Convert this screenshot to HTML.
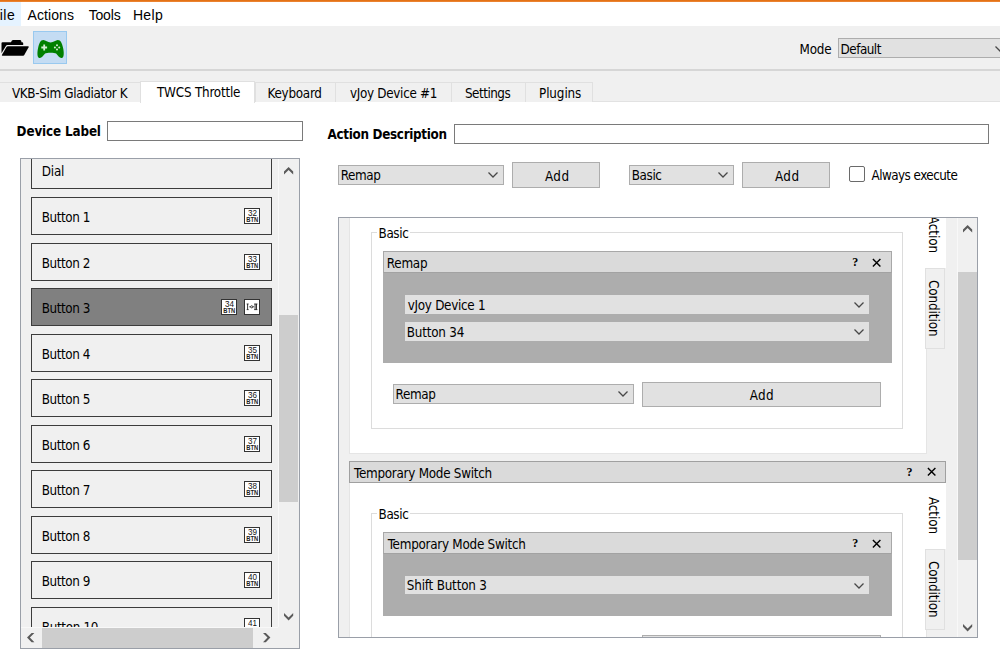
<!DOCTYPE html>
<html lang="en"><head><meta charset="utf-8"><title>Joystick Gremlin</title>
<style>
html,body{margin:0;padding:0}
body{width:1000px;height:671px;overflow:hidden;position:relative;background:#f0f0f0;color:#000;font-family:"DejaVu Sans Condensed", "Liberation Sans", sans-serif;font-size:13.33px}
.a{position:absolute;box-sizing:content-box}
.t{position:absolute;white-space:pre;line-height:normal}
svg{display:block;overflow:visible}
</style></head><body>
<div class="a" style="left:0px;top:0px;width:1000px;height:2px;background:linear-gradient(#e06a0a,#ee8a3c);"></div><div class="a" style="left:0px;top:2px;width:1000px;height:24px;background:#fff;"></div><div class="a" style="left:-2px;top:2px;width:23px;height:24px;background:#e5f3ff;"></div><span class="t" style="left:-9.40px;top:6.50px;font-family:'Liberation Sans', sans-serif;font-size:14px;letter-spacing:0.533px;">File</span><span class="t" style="left:27.50px;top:6.50px;font-family:'Liberation Sans', sans-serif;font-size:14px;letter-spacing:0.083px;">Actions</span><span class="t" style="left:88.70px;top:6.50px;font-family:'Liberation Sans', sans-serif;font-size:14px;letter-spacing:-0.175px;">Tools</span><span class="t" style="left:132.90px;top:6.50px;font-family:'Liberation Sans', sans-serif;font-size:14px;letter-spacing:0.367px;">Help</span><div class="a" style="left:0px;top:26px;width:1000px;height:44px;background:#f0f0f0;"></div><div class="a" style="left:0px;top:69px;width:1000px;height:2px;background:#d6d6d6;"></div><svg class="a" style="left:0;top:36px" width="32" height="24" viewBox="0 0 32 24"><path d="M1.5 7.2 Q1.5 6.2 2.5 6.2 L11 6.2 L11.9 4.6 Q12.3 3.9 13.2 3.9 L20 3.9 Q21 3.9 21.2 4.8 L21.5 6.2 L22.2 6.2 Q23.2 6.2 23.2 7.2 L23.2 8.9 L7.4 8.9 Q6.4 8.9 5.9 9.9 L1.5 17.3 Z" fill="#000"/><path d="M7.9 10.2 L28 10.2 Q29.2 10.2 28.6 11.3 L24.3 19.1 Q23.9 19.8 23.1 19.8 L2.6 19.8 Q1.4 19.8 2 18.7 L6.5 11 Q7 10.2 7.9 10.2 Z" fill="#000"/></svg><div class="a" style="left:33px;top:31px;width:32px;height:31px;background:#c4dcf3;border:1px solid #99c9ef;"></div><svg class="a" style="left:36px;top:38px" width="30" height="22" viewBox="0 0 30 22"><path d="M7.4 2.1 C9.6 2.1 11.6 4.5 14.6 4.5 C17.6 4.5 19.6 2.1 21.8 2.1 C24.8 2.1 26.1 5.5 27.1 10 C28 14 28.3 19.2 26 20 C23.7 20.7 22.1 17.5 20.1 15.6 C18.6 14.5 10.6 14.5 9.1 15.6 C7.1 17.5 5.5 20.7 3.2 20 C0.9 19.2 1.2 14 2.1 10 C3.1 5.5 4.4 2.1 7.4 2.1 Z" fill="#008000"/><path d="M7.3 6.6 h1.8 v2 h2 v1.8 h-2 v2 h-1.8 v-2 h-2 v-1.8 h2 z" fill="#d4ecd4"/><g fill="#d4ecd4"><circle cx="21" cy="7.2" r="1"/><circle cx="21" cy="11.5" r="1"/><circle cx="18.9" cy="9.4" r="1"/><circle cx="23.2" cy="9.4" r="1"/></g></svg><span class="t" style="left:799.50px;top:42.00px;font-family:'DejaVu Sans Condensed', 'Liberation Sans', sans-serif;font-size:13.33px;letter-spacing:-0.167px;">Mode</span><div class="a" style="left:838px;top:38px;width:170px;height:18px;background:#e1e1e1;border:1px solid #adadad;"></div><span class="t" style="left:840.60px;top:42.00px;font-family:'DejaVu Sans Condensed', 'Liberation Sans', sans-serif;font-size:13.33px;letter-spacing:-0.500px;">Default</span><svg class="a" style="left:994.3px;top:43.7px" width="12" height="10" viewBox="0 0 12 10"><path d="M1.5 2.5 L6 7 L10.5 2.5" fill="none" stroke="#484848" stroke-width="1.25"/></svg><div class="a" style="left:0px;top:102px;width:1000px;height:569px;background:#fff;"></div><div class="a" style="left:0px;top:101px;width:1000px;height:1px;background:#e2e2e2;"></div><div class="a" style="left:-2px;top:82px;width:143px;height:19px;background:#f0f0f0;border:1px solid #e0e0e0;border-bottom:none;"></div><span class="t" style="left:12.00px;top:86.00px;font-family:'DejaVu Sans Condensed', 'Liberation Sans', sans-serif;font-size:13.33px;letter-spacing:-0.350px;">VKB-Sim Gladiator K</span><div class="a" style="left:255px;top:82px;width:80px;height:19px;background:#f0f0f0;border:1px solid #e0e0e0;border-bottom:none;"></div><span class="t" style="left:267.50px;top:86.00px;font-family:'DejaVu Sans Condensed', 'Liberation Sans', sans-serif;font-size:13.33px;letter-spacing:-0.257px;">Keyboard</span><div class="a" style="left:335px;top:82px;width:116px;height:19px;background:#f0f0f0;border:1px solid #e0e0e0;border-bottom:none;"></div><span class="t" style="left:350.00px;top:86.00px;font-family:'DejaVu Sans Condensed', 'Liberation Sans', sans-serif;font-size:13.33px;letter-spacing:-0.308px;">vJoy Device #1</span><div class="a" style="left:451px;top:82px;width:74px;height:19px;background:#f0f0f0;border:1px solid #e0e0e0;border-bottom:none;"></div><span class="t" style="left:465.00px;top:86.00px;font-family:'DejaVu Sans Condensed', 'Liberation Sans', sans-serif;font-size:13.33px;letter-spacing:-0.500px;">Settings</span><div class="a" style="left:525px;top:82px;width:66px;height:19px;background:#f0f0f0;border:1px solid #e0e0e0;border-bottom:none;"></div><span class="t" style="left:539.00px;top:86.00px;font-family:'DejaVu Sans Condensed', 'Liberation Sans', sans-serif;font-size:13.33px;letter-spacing:-0.100px;">Plugins</span><div class="a" style="left:140px;top:81px;width:113px;height:21px;background:#fff;border:1px solid #e0e0e0;border-bottom:none;"></div><span class="t" style="left:157.00px;top:85.00px;font-family:'DejaVu Sans Condensed', 'Liberation Sans', sans-serif;font-size:13.33px;letter-spacing:-0.208px;">TWCS Throttle</span><span class="t" style="left:16.60px;top:123.50px;font-family:'DejaVu Sans Condensed', 'Liberation Sans', sans-serif;font-size:13.33px;font-weight:700;letter-spacing:-0.145px;">Device Label</span><div class="a" style="left:107px;top:121px;width:194px;height:18px;background:#fff;border:1px solid #7a7a7a;"></div><div class="a" style="left:20px;top:158px;width:278px;height:489px;background:#f0f0f0;border:1px solid #9a9fa8;overflow:hidden;"><div class="a" style="left:10px;top:-8px;width:239px;height:36px;background:#f0f0f0;border:1px solid #3c3c3c;"></div><span class="t" style="left:20.80px;top:5.00px;font-family:'DejaVu Sans Condensed', 'Liberation Sans', sans-serif;font-size:13.33px;letter-spacing:-0.200px;">Dial</span><div class="a" style="left:10px;top:38px;width:239px;height:36px;background:#f0f0f0;border:1px solid #3c3c3c;"></div><span class="t" style="left:20.80px;top:51.00px;font-family:'DejaVu Sans Condensed', 'Liberation Sans', sans-serif;font-size:13.33px;letter-spacing:-0.429px;">Button 1</span><svg class="a" style="left:223px;top:49px" width="16" height="16" viewBox="0 0 16 16"><rect x="0.5" y="0.5" width="15" height="15" fill="#fff" stroke="#333" stroke-width="1"/><text x="8.5" y="7.5" font-family="Liberation Sans, sans-serif" font-size="8.2" text-anchor="middle" fill="#111" textLength="9" lengthAdjust="spacingAndGlyphs">32</text><text x="8.2" y="14.2" font-family="Liberation Sans, sans-serif" font-size="6.5" font-weight="700" text-anchor="middle" fill="#222" textLength="12" lengthAdjust="spacingAndGlyphs">BTN</text></svg><div class="a" style="left:10px;top:84px;width:239px;height:36px;background:#f0f0f0;border:1px solid #3c3c3c;"></div><span class="t" style="left:20.80px;top:97.00px;font-family:'DejaVu Sans Condensed', 'Liberation Sans', sans-serif;font-size:13.33px;letter-spacing:-0.429px;">Button 2</span><svg class="a" style="left:223px;top:95px" width="16" height="16" viewBox="0 0 16 16"><rect x="0.5" y="0.5" width="15" height="15" fill="#fff" stroke="#333" stroke-width="1"/><text x="8.5" y="7.5" font-family="Liberation Sans, sans-serif" font-size="8.2" text-anchor="middle" fill="#111" textLength="9" lengthAdjust="spacingAndGlyphs">33</text><text x="8.2" y="14.2" font-family="Liberation Sans, sans-serif" font-size="6.5" font-weight="700" text-anchor="middle" fill="#222" textLength="12" lengthAdjust="spacingAndGlyphs">BTN</text></svg><div class="a" style="left:10px;top:129px;width:239px;height:36px;background:#808080;border:1px solid #3c3c3c;"></div><span class="t" style="left:20.80px;top:142.00px;font-family:'DejaVu Sans Condensed', 'Liberation Sans', sans-serif;font-size:13.33px;letter-spacing:-0.429px;">Button 3</span><svg class="a" style="left:200px;top:140px" width="16" height="16" viewBox="0 0 16 16"><rect x="0.5" y="0.5" width="15" height="15" fill="#fff" stroke="#333" stroke-width="1"/><text x="8.5" y="7.5" font-family="Liberation Sans, sans-serif" font-size="8.2" text-anchor="middle" fill="#111" textLength="9" lengthAdjust="spacingAndGlyphs">34</text><text x="8.2" y="14.2" font-family="Liberation Sans, sans-serif" font-size="6.5" font-weight="700" text-anchor="middle" fill="#222" textLength="12" lengthAdjust="spacingAndGlyphs">BTN</text></svg><svg class="a" style="left:223px;top:140px" width="16" height="16" viewBox="0 0 16 16"><rect x="0.5" y="0.5" width="15" height="15" fill="#fff" stroke="#333" stroke-width="1"/><path d="M3.6 5 V10.6 M2.7 5 H4.6 M2.7 10.6 H4.6 M11.1 5 V10.6 M12.5 5 V10.6 M10.2 5 H13.4 M10.2 10.6 H13.4" stroke="#222" stroke-width="0.9" fill="none"/><path d="M5.2 7.8 H10.2" stroke="#222" stroke-width="0.8"/><circle cx="7.7" cy="7.8" r="1.1" fill="#fff" stroke="#222" stroke-width="0.8"/></svg><div class="a" style="left:10px;top:175px;width:239px;height:36px;background:#f0f0f0;border:1px solid #3c3c3c;"></div><span class="t" style="left:20.80px;top:188.00px;font-family:'DejaVu Sans Condensed', 'Liberation Sans', sans-serif;font-size:13.33px;letter-spacing:-0.429px;">Button 4</span><svg class="a" style="left:223px;top:186px" width="16" height="16" viewBox="0 0 16 16"><rect x="0.5" y="0.5" width="15" height="15" fill="#fff" stroke="#333" stroke-width="1"/><text x="8.5" y="7.5" font-family="Liberation Sans, sans-serif" font-size="8.2" text-anchor="middle" fill="#111" textLength="9" lengthAdjust="spacingAndGlyphs">35</text><text x="8.2" y="14.2" font-family="Liberation Sans, sans-serif" font-size="6.5" font-weight="700" text-anchor="middle" fill="#222" textLength="12" lengthAdjust="spacingAndGlyphs">BTN</text></svg><div class="a" style="left:10px;top:220px;width:239px;height:36px;background:#f0f0f0;border:1px solid #3c3c3c;"></div><span class="t" style="left:20.80px;top:233.00px;font-family:'DejaVu Sans Condensed', 'Liberation Sans', sans-serif;font-size:13.33px;letter-spacing:-0.429px;">Button 5</span><svg class="a" style="left:223px;top:231px" width="16" height="16" viewBox="0 0 16 16"><rect x="0.5" y="0.5" width="15" height="15" fill="#fff" stroke="#333" stroke-width="1"/><text x="8.5" y="7.5" font-family="Liberation Sans, sans-serif" font-size="8.2" text-anchor="middle" fill="#111" textLength="9" lengthAdjust="spacingAndGlyphs">36</text><text x="8.2" y="14.2" font-family="Liberation Sans, sans-serif" font-size="6.5" font-weight="700" text-anchor="middle" fill="#222" textLength="12" lengthAdjust="spacingAndGlyphs">BTN</text></svg><div class="a" style="left:10px;top:266px;width:239px;height:36px;background:#f0f0f0;border:1px solid #3c3c3c;"></div><span class="t" style="left:20.80px;top:279.00px;font-family:'DejaVu Sans Condensed', 'Liberation Sans', sans-serif;font-size:13.33px;letter-spacing:-0.429px;">Button 6</span><svg class="a" style="left:223px;top:277px" width="16" height="16" viewBox="0 0 16 16"><rect x="0.5" y="0.5" width="15" height="15" fill="#fff" stroke="#333" stroke-width="1"/><text x="8.5" y="7.5" font-family="Liberation Sans, sans-serif" font-size="8.2" text-anchor="middle" fill="#111" textLength="9" lengthAdjust="spacingAndGlyphs">37</text><text x="8.2" y="14.2" font-family="Liberation Sans, sans-serif" font-size="6.5" font-weight="700" text-anchor="middle" fill="#222" textLength="12" lengthAdjust="spacingAndGlyphs">BTN</text></svg><div class="a" style="left:10px;top:311px;width:239px;height:36px;background:#f0f0f0;border:1px solid #3c3c3c;"></div><span class="t" style="left:20.80px;top:324.00px;font-family:'DejaVu Sans Condensed', 'Liberation Sans', sans-serif;font-size:13.33px;letter-spacing:-0.429px;">Button 7</span><svg class="a" style="left:223px;top:322px" width="16" height="16" viewBox="0 0 16 16"><rect x="0.5" y="0.5" width="15" height="15" fill="#fff" stroke="#333" stroke-width="1"/><text x="8.5" y="7.5" font-family="Liberation Sans, sans-serif" font-size="8.2" text-anchor="middle" fill="#111" textLength="9" lengthAdjust="spacingAndGlyphs">38</text><text x="8.2" y="14.2" font-family="Liberation Sans, sans-serif" font-size="6.5" font-weight="700" text-anchor="middle" fill="#222" textLength="12" lengthAdjust="spacingAndGlyphs">BTN</text></svg><div class="a" style="left:10px;top:357px;width:239px;height:36px;background:#f0f0f0;border:1px solid #3c3c3c;"></div><span class="t" style="left:20.80px;top:370.00px;font-family:'DejaVu Sans Condensed', 'Liberation Sans', sans-serif;font-size:13.33px;letter-spacing:-0.429px;">Button 8</span><svg class="a" style="left:223px;top:368px" width="16" height="16" viewBox="0 0 16 16"><rect x="0.5" y="0.5" width="15" height="15" fill="#fff" stroke="#333" stroke-width="1"/><text x="8.5" y="7.5" font-family="Liberation Sans, sans-serif" font-size="8.2" text-anchor="middle" fill="#111" textLength="9" lengthAdjust="spacingAndGlyphs">39</text><text x="8.2" y="14.2" font-family="Liberation Sans, sans-serif" font-size="6.5" font-weight="700" text-anchor="middle" fill="#222" textLength="12" lengthAdjust="spacingAndGlyphs">BTN</text></svg><div class="a" style="left:10px;top:402px;width:239px;height:36px;background:#f0f0f0;border:1px solid #3c3c3c;"></div><span class="t" style="left:20.80px;top:415.00px;font-family:'DejaVu Sans Condensed', 'Liberation Sans', sans-serif;font-size:13.33px;letter-spacing:-0.429px;">Button 9</span><svg class="a" style="left:223px;top:413px" width="16" height="16" viewBox="0 0 16 16"><rect x="0.5" y="0.5" width="15" height="15" fill="#fff" stroke="#333" stroke-width="1"/><text x="8.5" y="7.5" font-family="Liberation Sans, sans-serif" font-size="8.2" text-anchor="middle" fill="#111" textLength="9" lengthAdjust="spacingAndGlyphs">40</text><text x="8.2" y="14.2" font-family="Liberation Sans, sans-serif" font-size="6.5" font-weight="700" text-anchor="middle" fill="#222" textLength="12" lengthAdjust="spacingAndGlyphs">BTN</text></svg><div class="a" style="left:10px;top:448px;width:239px;height:36px;background:#f0f0f0;border:1px solid #3c3c3c;"></div><span class="t" style="left:20.80px;top:461.00px;font-family:'DejaVu Sans Condensed', 'Liberation Sans', sans-serif;font-size:13.33px;letter-spacing:-0.338px;">Button 10</span><svg class="a" style="left:223px;top:459px" width="16" height="16" viewBox="0 0 16 16"><rect x="0.5" y="0.5" width="15" height="15" fill="#fff" stroke="#333" stroke-width="1"/><text x="8.5" y="7.5" font-family="Liberation Sans, sans-serif" font-size="8.2" text-anchor="middle" fill="#111" textLength="9" lengthAdjust="spacingAndGlyphs">41</text><text x="8.2" y="14.2" font-family="Liberation Sans, sans-serif" font-size="6.5" font-weight="700" text-anchor="middle" fill="#222" textLength="12" lengthAdjust="spacingAndGlyphs">BTN</text></svg><div class="a" style="left:257px;top:0px;width:20px;height:468px;background:#f0f0f0;"></div><div class="a" style="left:257px;top:0px;width:1px;height:468px;background:#f8f8f8;"></div><div class="a" style="left:258px;top:156px;width:19px;height:187px;background:#cdcdcd;"></div><svg class="a" style="left:262.9px;top:8.1px" width="9.2" height="7.4" viewBox="0 0 9.2 7.4"><polygon points="4.6,0.0 9.2,4.6 9.2,7.4 4.6,2.9 0.0,7.4 0.0,4.6" fill="#5a5a5a"/></svg><svg class="a" style="left:262.9px;top:454.2px" width="9.2" height="7.4" viewBox="0 0 9.2 7.4"><polygon points="4.6,7.4 9.2,2.8 9.2,0.0 4.6,4.5 0.0,0.0 0.0,2.8" fill="#5a5a5a"/></svg><div class="a" style="left:0px;top:468px;width:278px;height:21px;background:#f0f0f0;"></div><div class="a" style="left:0px;top:468px;width:257px;height:1px;background:#f8f8f8;"></div><div class="a" style="left:21px;top:469px;width:211px;height:20px;background:#cdcdcd;"></div><svg class="a" style="left:6.3px;top:474.1px" width="7.4" height="9.2" viewBox="0 0 7.4 9.2"><polygon points="0.0,4.6 4.6,9.2 7.4,9.2 2.9,4.6 7.4,0.0 4.6,0.0" fill="#5a5a5a"/></svg><svg class="a" style="left:242.3px;top:474.1px" width="7.4" height="9.2" viewBox="0 0 7.4 9.2"><polygon points="7.4,4.6 2.8,9.2 0.0,9.2 4.5,4.6 0.0,0.0 2.8,0.0" fill="#5a5a5a"/></svg></div><span class="t" style="left:327.50px;top:127.00px;font-family:'DejaVu Sans Condensed', 'Liberation Sans', sans-serif;font-size:13.33px;font-weight:700;letter-spacing:-0.306px;">Action Description</span><div class="a" style="left:454px;top:124px;width:533px;height:18px;background:#fff;border:1px solid #7a7a7a;"></div><div class="a" style="left:338px;top:165px;width:164px;height:18px;background:#e1e1e1;border:1px solid #adadad;"></div><span class="t" style="left:340.70px;top:168.00px;font-family:'DejaVu Sans Condensed', 'Liberation Sans', sans-serif;font-size:13.33px;letter-spacing:-0.375px;">Remap</span><svg class="a" style="left:487.4px;top:170.2px" width="12" height="10" viewBox="0 0 12 10"><path d="M1.5 2.5 L6 7 L10.5 2.5" fill="none" stroke="#484848" stroke-width="1.25"/></svg><div class="a" style="left:512px;top:162px;width:86px;height:24px;background:#e1e1e1;border:1px solid #adadad;"></div><span class="t" style="left:545.00px;top:169.00px;font-family:'DejaVu Sans Condensed', 'Liberation Sans', sans-serif;font-size:13.33px;letter-spacing:0.400px;">Add</span><div class="a" style="left:629px;top:165px;width:103px;height:18px;background:#e1e1e1;border:1px solid #adadad;"></div><span class="t" style="left:631.70px;top:168.00px;font-family:'DejaVu Sans Condensed', 'Liberation Sans', sans-serif;font-size:13.33px;letter-spacing:-0.375px;">Basic</span><svg class="a" style="left:717.4px;top:170.2px" width="12" height="10" viewBox="0 0 12 10"><path d="M1.5 2.5 L6 7 L10.5 2.5" fill="none" stroke="#484848" stroke-width="1.25"/></svg><div class="a" style="left:742px;top:162px;width:86px;height:24px;background:#e1e1e1;border:1px solid #adadad;"></div><span class="t" style="left:775.00px;top:169.00px;font-family:'DejaVu Sans Condensed', 'Liberation Sans', sans-serif;font-size:13.33px;letter-spacing:0.400px;">Add</span><div class="a" style="left:849px;top:166px;width:14px;height:14px;background:#fff;border:1px solid #6a6a6a;border-radius:2px;"></div><span class="t" style="left:871.50px;top:168.00px;font-family:'DejaVu Sans Condensed', 'Liberation Sans', sans-serif;font-size:13.33px;letter-spacing:-0.538px;">Always execute</span><div class="a" style="left:338px;top:217px;width:638px;height:419px;background:#f0f0f0;border:1px solid #9a9fa8;overflow:hidden;"><div class="a" style="left:10px;top:-18px;width:576px;height:252px;background:#fff;border:1px solid #e5e5e5;"></div><div class="a" style="left:586px;top:-18px;width:21px;height:68px;background:#fff;"></div><div class="a" style="left:586px;top:50px;width:18px;height:79px;background:#f0f0f0;border:1px solid #e0e0e0;"></div><span class="t" style="left:601.50px;top:-2.50px;font-family:'DejaVu Sans Condensed', 'Liberation Sans', sans-serif;font-size:13.33px;letter-spacing:-0.100px;transform-origin:0 0;transform:rotate(90deg);">Action</span><span class="t" style="left:601.50px;top:62.00px;font-family:'DejaVu Sans Condensed', 'Liberation Sans', sans-serif;font-size:13.33px;letter-spacing:-0.088px;transform-origin:0 0;transform:rotate(90deg);">Condition</span><div class="a" style="left:32px;top:14px;width:530px;height:195px;border:1px solid #dcdcdc;"></div><div class="a" style="left:38px;top:8px;width:33px;height:14px;background:#fff;"></div><span class="t" style="left:39.60px;top:7.60px;font-family:'DejaVu Sans Condensed', 'Liberation Sans', sans-serif;font-size:13.33px;letter-spacing:-0.400px;">Basic</span><div class="a" style="left:44px;top:33px;width:507px;height:20px;background:#dadada;border:1px solid #a8a8a8;border-bottom:1px solid #a2a2a2;"></div><span class="t" style="left:47.80px;top:38.00px;font-family:'DejaVu Sans Condensed', 'Liberation Sans', sans-serif;font-size:13.33px;letter-spacing:-0.250px;">Remap</span><span class="t" style="left:513.20px;top:37.30px;font-family:'Liberation Serif', serif;font-size:12px;font-weight:700;letter-spacing:2.000px;">?</span><svg class="a" style="left:532.2px;top:38.80000000000001px" width="11" height="11" viewBox="0 0 11 11"><path d="M1.9 1.9 L9.4 9.4 M9.4 1.9 L1.9 9.4" stroke="#000" stroke-width="1.4"/></svg><div class="a" style="left:44px;top:55px;width:509px;height:90px;background:#adadad;"></div><div class="a" style="left:66px;top:77px;width:464px;height:19px;background:#e1e1e1;"></div><span class="t" style="left:68.80px;top:79.70px;font-family:'DejaVu Sans Condensed', 'Liberation Sans', sans-serif;font-size:13.33px;letter-spacing:-0.300px;">vJoy Device 1</span><svg class="a" style="left:514.3px;top:81.80000000000001px" width="12" height="10" viewBox="0 0 12 10"><path d="M1.5 2.5 L6 7 L10.5 2.5" fill="none" stroke="#484848" stroke-width="1.25"/></svg><div class="a" style="left:66px;top:104px;width:464px;height:19px;background:#e1e1e1;"></div><span class="t" style="left:67.80px;top:106.70px;font-family:'DejaVu Sans Condensed', 'Liberation Sans', sans-serif;font-size:13.33px;letter-spacing:-0.213px;">Button 34</span><svg class="a" style="left:514.3px;top:108.80000000000001px" width="12" height="10" viewBox="0 0 12 10"><path d="M1.5 2.5 L6 7 L10.5 2.5" fill="none" stroke="#484848" stroke-width="1.25"/></svg><div class="a" style="left:54px;top:166px;width:239px;height:18px;background:#e1e1e1;border:1px solid #adadad;"></div><span class="t" style="left:56.60px;top:169.00px;font-family:'DejaVu Sans Condensed', 'Liberation Sans', sans-serif;font-size:13.33px;letter-spacing:-0.375px;">Remap</span><svg class="a" style="left:278.20000000000005px;top:171.39999999999998px" width="12" height="10" viewBox="0 0 12 10"><path d="M1.5 2.5 L6 7 L10.5 2.5" fill="none" stroke="#484848" stroke-width="1.25"/></svg><div class="a" style="left:303px;top:164px;width:237px;height:23px;background:#e1e1e1;border:1px solid #adadad;"></div><span class="t" style="left:410.80px;top:170.00px;font-family:'DejaVu Sans Condensed', 'Liberation Sans', sans-serif;font-size:13.33px;letter-spacing:0.300px;">Add</span><div class="a" style="left:10px;top:243px;width:595px;height:20px;background:#dadada;border:1px solid #a0a0a0;"></div><span class="t" style="left:15.10px;top:247.50px;font-family:'DejaVu Sans Condensed', 'Liberation Sans', sans-serif;font-size:13.33px;letter-spacing:-0.260px;">Temporary Mode Switch</span><span class="t" style="left:567.60px;top:247.00px;font-family:'Liberation Serif', serif;font-size:12px;font-weight:700;letter-spacing:2.000px;">?</span><svg class="a" style="left:586.7px;top:248.39999999999998px" width="11" height="11" viewBox="0 0 11 11"><path d="M1.9 1.9 L9.4 9.4 M9.4 1.9 L1.9 9.4" stroke="#000" stroke-width="1.4"/></svg><div class="a" style="left:10px;top:265px;width:576px;height:217px;background:#fff;border:1px solid #e5e5e5;border-top:none;"></div><div class="a" style="left:586px;top:265px;width:21px;height:66px;background:#fff;"></div><div class="a" style="left:586px;top:331px;width:18px;height:79px;background:#f0f0f0;border:1px solid #e0e0e0;"></div><span class="t" style="left:601.50px;top:278.50px;font-family:'DejaVu Sans Condensed', 'Liberation Sans', sans-serif;font-size:13.33px;letter-spacing:-0.100px;transform-origin:0 0;transform:rotate(90deg);">Action</span><span class="t" style="left:601.50px;top:343.00px;font-family:'DejaVu Sans Condensed', 'Liberation Sans', sans-serif;font-size:13.33px;letter-spacing:-0.088px;transform-origin:0 0;transform:rotate(90deg);">Condition</span><div class="a" style="left:32px;top:295px;width:530px;height:195px;border:1px solid #dcdcdc;"></div><div class="a" style="left:38px;top:289px;width:33px;height:14px;background:#fff;"></div><span class="t" style="left:39.60px;top:288.60px;font-family:'DejaVu Sans Condensed', 'Liberation Sans', sans-serif;font-size:13.33px;letter-spacing:-0.400px;">Basic</span><div class="a" style="left:44px;top:314px;width:507px;height:20px;background:#dadada;border:1px solid #a8a8a8;border-bottom:1px solid #a2a2a2;"></div><span class="t" style="left:48.80px;top:319.00px;font-family:'DejaVu Sans Condensed', 'Liberation Sans', sans-serif;font-size:13.33px;letter-spacing:-0.260px;">Temporary Mode Switch</span><span class="t" style="left:513.20px;top:318.30px;font-family:'Liberation Serif', serif;font-size:12px;font-weight:700;letter-spacing:2.000px;">?</span><svg class="a" style="left:532.2px;top:319.79999999999995px" width="11" height="11" viewBox="0 0 11 11"><path d="M1.9 1.9 L9.4 9.4 M9.4 1.9 L1.9 9.4" stroke="#000" stroke-width="1.4"/></svg><div class="a" style="left:44px;top:336px;width:509px;height:62px;background:#adadad;"></div><div class="a" style="left:66px;top:358px;width:464px;height:18px;background:#e1e1e1;"></div><span class="t" style="left:67.80px;top:360.00px;font-family:'DejaVu Sans Condensed', 'Liberation Sans', sans-serif;font-size:13.33px;letter-spacing:-0.192px;">Shift Button 3</span><svg class="a" style="left:514.3px;top:362.79999999999995px" width="12" height="10" viewBox="0 0 12 10"><path d="M1.5 2.5 L6 7 L10.5 2.5" fill="none" stroke="#484848" stroke-width="1.25"/></svg><div class="a" style="left:54px;top:419px;width:239px;height:18px;background:#e1e1e1;border:1px solid #adadad;"></div><span class="t" style="left:56.60px;top:422.00px;font-family:'DejaVu Sans Condensed', 'Liberation Sans', sans-serif;font-size:13.33px;letter-spacing:-0.375px;">Remap</span><svg class="a" style="left:278.20000000000005px;top:424.4px" width="12" height="10" viewBox="0 0 12 10"><path d="M1.5 2.5 L6 7 L10.5 2.5" fill="none" stroke="#484848" stroke-width="1.25"/></svg><div class="a" style="left:303px;top:417px;width:237px;height:23px;background:#e1e1e1;border:1px solid #adadad;"></div><span class="t" style="left:410.80px;top:423.00px;font-family:'DejaVu Sans Condensed', 'Liberation Sans', sans-serif;font-size:13.33px;letter-spacing:0.300px;">Add</span><div class="a" style="left:619px;top:0px;width:19px;height:419px;background:#f0f0f0;"></div><div class="a" style="left:618px;top:0px;width:1px;height:419px;background:#f8f8f8;"></div><div class="a" style="left:619px;top:54px;width:19px;height:288px;background:#cdcdcd;"></div><svg class="a" style="left:623.9px;top:7.4px" width="9.2" height="7.4" viewBox="0 0 9.2 7.4"><polygon points="4.6,0.0 9.2,4.6 9.2,7.4 4.6,2.9 0.0,7.4 0.0,4.6" fill="#5a5a5a"/></svg><svg class="a" style="left:623.9px;top:405.8px" width="9.2" height="7.4" viewBox="0 0 9.2 7.4"><polygon points="4.6,7.4 9.2,2.8 9.2,0.0 4.6,4.5 0.0,0.0 0.0,2.8" fill="#5a5a5a"/></svg></div>
</body></html>
